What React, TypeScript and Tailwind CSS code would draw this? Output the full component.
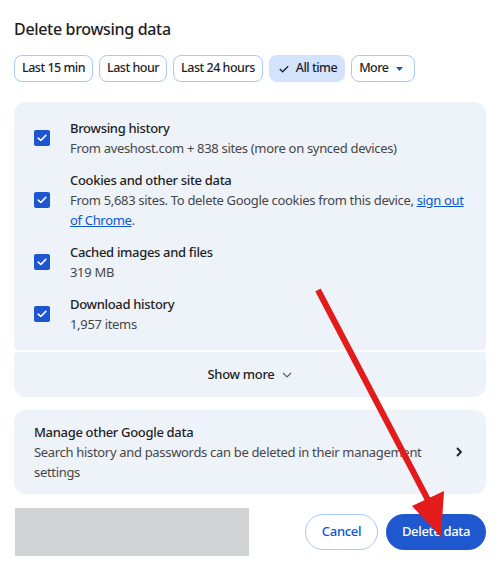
import React from 'react';

const ranges = ['Last 15 min', 'Last hour', 'Last 24 hours'];

const items = [
  { title: 'Browsing history', sub: 'From aveshost.com + 838 sites (more on synced devices)' },
  { title: 'Cookies and other site data', sub: null },
  { title: 'Cached images and files', sub: '319 MB' },
  { title: 'Download history', sub: '1,957 items' },
];

const Check = () => (
  <div className="w-4 h-4 rounded-[2px] bg-[#1f56d0] flex items-center justify-center shrink-0">
    <svg width="10" height="8" viewBox="0 0 10 8" fill="none">
      <path d="M1.2 4.1 L3.8 6.5 L8.8 1.4" stroke="white" strokeWidth="1.6" strokeLinecap="round" strokeLinejoin="round" />
    </svg>
  </div>
);

const App: React.FC = () => {
  return (
    <div className="relative w-[500px] h-[568px] overflow-hidden bg-white px-[14px] text-[#1f1f1f] tracking-[-0.32px] font-['Segoe_UI','Noto_Sans',sans-serif]">
      <h1 className="pt-[17px] text-[16px] leading-6 font-medium">Delete browsing data</h1>

      {/* time range chips */}
      <div className="mt-[14px] flex gap-[6px] text-[12.5px] tracking-[-0.5px] font-medium">
        {ranges.map(r => (
          <div key={r} className="h-[27px] px-[7px] flex items-center rounded-[8px] border border-[#a8c7fa]">{r}</div>
        ))}
        <div className="h-[27px] pl-[10px] pr-[8px] flex items-center gap-[7px] rounded-[8px] bg-[#d3e3fd]">
          <svg width="10" height="8" viewBox="0 0 10 8" fill="none">
            <path d="M0.8 4 L3.6 6.8 L9.2 1.2" stroke="#1f1f1f" strokeWidth="1.3" />
          </svg>
          All time
        </div>
        <div className="h-[27px] pl-[7px] pr-[11px] flex items-center gap-[8px] rounded-[8px] border border-[#a8c7fa]">
          More
          <svg width="7" height="4" viewBox="0 0 7 4"><path d="M0 0 H7 L3.5 4 Z" fill="#0b57d0" /></svg>
        </div>
      </div>

      {/* data types */}
      <div className="mt-[20px] flex flex-col gap-[2px]">
        <div className="bg-[#eef2f9] rounded-t-[12px] rounded-b-[4px] pt-[16px] pb-[16px] flex flex-col gap-[12px]">
          {items.map(it => (
            <div key={it.title} className="flex items-center">
              <div className="w-[56px] pl-[20px]"><Check /></div>
              <div className="flex-1 pr-[20px] text-[13px] leading-5">
                <div className="font-medium">{it.title}</div>
                <div className="text-[#474747]">
                  {it.sub ?? (
                    <>
                      From 5,683 sites. To delete Google cookies from this device,{' '}
                      <span className="text-[#0b57d0] underline">sign out of Chrome</span>.
                    </>
                  )}
                </div>
              </div>
            </div>
          ))}
        </div>
        <div className="h-[45px] bg-[#eef2f9] rounded-t-[4px] rounded-b-[12px] flex items-center justify-center gap-[8px] text-[13px] font-medium">
          Show more
          <svg width="10" height="6" viewBox="0 0 10 6" fill="none">
            <path d="M1 1 L5 5 L9 1" stroke="#5f6368" strokeWidth="1.2" />
          </svg>
        </div>
      </div>

      <div className="mt-[13px] bg-[#eef2f9] rounded-[12px] pl-[20px] pr-[24px] py-[12px] flex items-center gap-[20px]">
        <div className="flex-1 text-[13px] leading-5">
          <div className="font-medium">Manage other Google data</div>
          <div className="text-[#474747]">Search history and passwords can be deleted in their management settings</div>
        </div>
        <svg width="6" height="10" viewBox="0 0 6 10" fill="none">
          <path d="M1 1 L5 5 L1 9" stroke="#1f1f1f" strokeWidth="1.8" />
        </svg>
      </div>

      {/* footer */}
      <div className="mt-[14px] flex items-center">
        <div className="w-[234px] h-[48px] ml-[1px] bg-[#d2d3d4]" />
        <div className="ml-auto flex gap-[8px] text-[13px] font-medium">
          <button className="h-[36px] w-[73px] rounded-full border border-[#a8c7fa] text-[#0b57d0]">Cancel</button>
          <button className="h-[36px] w-[100px] rounded-full bg-[#1f57cf] text-white">Delete data</button>
        </div>
      </div>

      {/* red annotation arrow */}
      <svg className="absolute inset-0 pointer-events-none" width="500" height="568" viewBox="0 0 500 568">
        <line x1="318" y1="290" x2="428" y2="500" stroke="#e31b1b" strokeWidth="6" />
        <polygon points="412,506 444,491 441,537" fill="#e31b1b" />
      </svg>
    </div>
  );
};

export default App;
